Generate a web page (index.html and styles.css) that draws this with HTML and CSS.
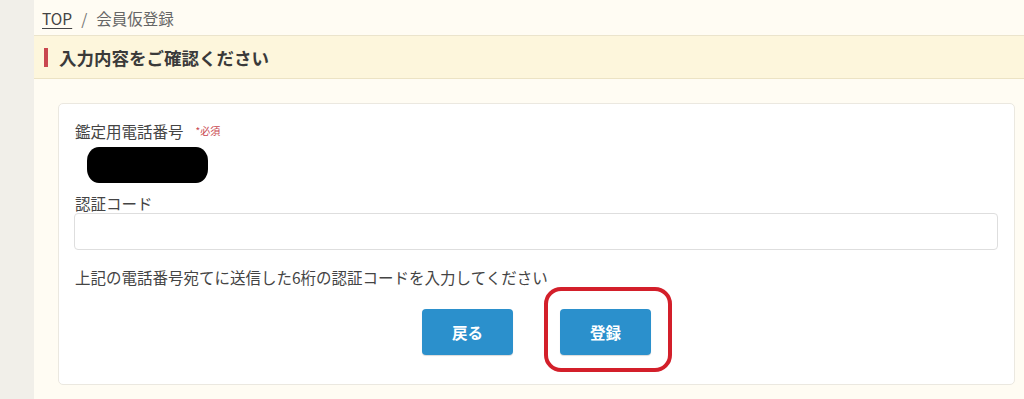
FILE: index.html
```html
<!DOCTYPE html>
<html lang="ja">
<head>
<meta charset="utf-8">
<title>会員仮登録</title>
<link rel="stylesheet" href="styles.css">
</head>
<body>
<div class="layout">
  <aside class="side"></aside>
  <main class="main">
    <nav class="crumbs"><a href="#" class="crumb-link">TOP</a><span class="sep">/</span><span>会員仮登録</span></nav>
    <h1 class="title"><span class="bar"></span>入力内容をご確認ください</h1>
    <section class="card">
      <div class="label">鑑定用電話番号<span class="req">*必須</span></div>
      <div class="redact"></div>
      <div class="label label2">認証コード</div>
      <div class="input"></div>
      <p class="hint">上記の電話番号宛てに送信した6桁の認証コードを入力してください</p>
      <div class="actions">
        <button class="btn">戻る</button>
        <div class="btn-wrap">
          <button class="btn">登録</button>
          <span class="mark"></span>
        </div>
      </div>
    </section>
  </main>
</div>
</body>
</html>
```
FILE: styles.css
```css
html, body {
  margin: 0;
  padding: 0;
  height: 100%;
}
body {
  font-family: "Noto Sans CJK JP", "Noto Sans", sans-serif;
  background: #fffcf3;
  color: #444;
}
.layout {
  display: flex;
  min-height: 399px;
}
.side {
  width: 34px;
  flex: none;
  background: #f1efe9;
}
.main {
  flex: 1;
  background: #fffcf3;
  display: flex;
  flex-direction: column;
}
.crumbs {
  height: 36px;
  box-sizing: border-box;
  padding-left: 8px;
  display: flex;
  align-items: center;
  font-size: 15.5px;
  color: #666;
  border-bottom: 1px solid #ebe4cc;
}
.crumb-link {
  color: #444;
  text-decoration: underline;
  text-underline-offset: 3px;
}
.sep {
  margin: 0 9px;
  color: #777;
}
.title {
  margin: 0;
  height: 43px;
  box-sizing: border-box;
  background: #fdf6dc;
  border-bottom: 1px solid #ece3c4;
  display: flex;
  align-items: center;
  padding-left: 10px;
  font-size: 17.5px;
  font-weight: bold;
  color: #3a3a3a;
}
.bar {
  width: 4px;
  height: 19px;
  background: #c9474f;
  margin-right: 11px;
}
.card {
  margin: 24px 9px 13px 24px;
  background: #fff;
  border: 1px solid #ebe8e0;
  border-radius: 5px;
  padding: 16px 16px 29px 16px;
  display: flex;
  flex-direction: column;
}
.label {
  font-size: 15.5px;
  line-height: 22px;
  color: #444;
  display: flex;
  align-items: center;
}
.req {
  font-size: 10px;
  color: #c9474f;
  margin-left: 12px;
}
.redact {
  width: 121px;
  height: 36px;
  margin: 5px 0 0 12px;
  background: #000;
  border-radius: 12px / 14px;
}
.label2 {
  margin-top: 10px;
  line-height: 20px;
}
.input {
  height: 37px;
  box-sizing: border-box;
  border: 1px solid #dedede;
  border-radius: 4px;
  margin-right: 0;
  margin-left: -1px;
}
.hint {
  margin: 17px 0 0 0;
  font-size: 15.5px;
  line-height: 20px;
  color: #444;
}
.actions {
  margin-top: 22px;
  display: flex;
  justify-content: center;
  gap: 47px;
}
.btn {
  width: 91px;
  height: 46px;
  border: none;
  border-radius: 4px;
  background: #2b90cc;
  color: #fff;
  font-family: "Noto Sans CJK JP", "Noto Sans", sans-serif;
  font-size: 15.5px;
  font-weight: bold;
  box-shadow: 0 1px 1px rgba(0,0,0,0.15);
  padding: 0;
}
.btn-wrap {
  position: relative;
}
.mark {
  position: absolute;
  left: -16px;
  top: -22px;
  width: 128px;
  height: 85px;
  box-sizing: border-box;
  border: 4px solid #d31f2a;
  border-radius: 17px;
}
```
